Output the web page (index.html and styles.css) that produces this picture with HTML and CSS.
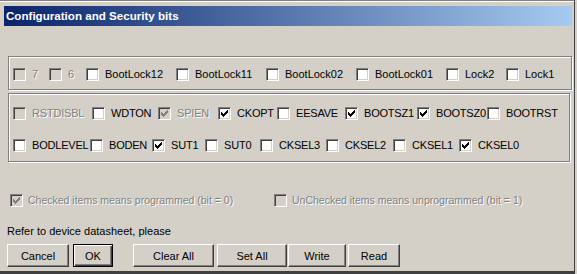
FILE: index.html
```html
<!DOCTYPE html>
<html lang="en">
<head>
    <meta charset="UTF-8">
    <meta name="viewport" content="width=device-width, initial-scale=1.0">
    <title>Configuration and Security bits</title>
    <link rel="stylesheet" href="styles.css">
</head>
<body>
    <div class="window">
        <div class="titlebar">Configuration and Security bits</div>

        <div class="content">
            <!-- Lock bits -->
            <div class="group group-lock">
                <div class="row row-lock">
                    <div class="item off"><span class="cb"></span><span class="lbl">7</span></div>
                    <div class="item off"><span class="cb"></span><span class="lbl">6</span></div>
                    <div class="item"><span class="cb"></span><span class="lbl">BootLock12</span></div>
                    <div class="item"><span class="cb"></span><span class="lbl">BootLock11</span></div>
                    <div class="item"><span class="cb"></span><span class="lbl">BootLock02</span></div>
                    <div class="item"><span class="cb"></span><span class="lbl">BootLock01</span></div>
                    <div class="item"><span class="cb"></span><span class="lbl">Lock2</span></div>
                    <div class="item"><span class="cb"></span><span class="lbl">Lock1</span></div>
                </div>
            </div>

            <!-- Fuse bits -->
            <div class="group group-fuse">
                <div class="row row-high">
                    <div class="item off"><span class="cb"></span><span class="lbl">RSTDISBL</span></div>
                    <div class="item"><span class="cb"></span><span class="lbl">WDTON</span></div>
                    <div class="item off"><span class="cb"><svg width="7" height="7" viewBox="0 0 7 7"><path d="M0 2h1v3h-1zM1 3h1v3h-1zM2 4h1v3h-1zM3 3h1v3h-1zM4 2h1v3h-1zM5 1h1v3h-1zM6 0h1v3h-1z"/></svg></span><span class="lbl">SPIEN</span></div>
                    <div class="item"><span class="cb"><svg width="7" height="7" viewBox="0 0 7 7"><path d="M0 2h1v3h-1zM1 3h1v3h-1zM2 4h1v3h-1zM3 3h1v3h-1zM4 2h1v3h-1zM5 1h1v3h-1zM6 0h1v3h-1z"/></svg></span><span class="lbl">CKOPT</span></div>
                    <div class="item"><span class="cb"></span><span class="lbl">EESAVE</span></div>
                    <div class="item"><span class="cb"><svg width="7" height="7" viewBox="0 0 7 7"><path d="M0 2h1v3h-1zM1 3h1v3h-1zM2 4h1v3h-1zM3 3h1v3h-1zM4 2h1v3h-1zM5 1h1v3h-1zM6 0h1v3h-1z"/></svg></span><span class="lbl">BOOTSZ1</span></div>
                    <div class="item"><span class="cb"><svg width="7" height="7" viewBox="0 0 7 7"><path d="M0 2h1v3h-1zM1 3h1v3h-1zM2 4h1v3h-1zM3 3h1v3h-1zM4 2h1v3h-1zM5 1h1v3h-1zM6 0h1v3h-1z"/></svg></span><span class="lbl">BOOTSZ0</span></div>
                    <div class="item"><span class="cb"></span><span class="lbl">BOOTRST</span></div>
                </div>
                <div class="row row-low">
                    <div class="item"><span class="cb"></span><span class="lbl">BODLEVEL</span></div>
                    <div class="item"><span class="cb"></span><span class="lbl">BODEN</span></div>
                    <div class="item"><span class="cb"><svg width="7" height="7" viewBox="0 0 7 7"><path d="M0 2h1v3h-1zM1 3h1v3h-1zM2 4h1v3h-1zM3 3h1v3h-1zM4 2h1v3h-1zM5 1h1v3h-1zM6 0h1v3h-1z"/></svg></span><span class="lbl">SUT1</span></div>
                    <div class="item"><span class="cb"></span><span class="lbl">SUT0</span></div>
                    <div class="item"><span class="cb"></span><span class="lbl">CKSEL3</span></div>
                    <div class="item"><span class="cb"></span><span class="lbl">CKSEL2</span></div>
                    <div class="item"><span class="cb"></span><span class="lbl">CKSEL1</span></div>
                    <div class="item"><span class="cb"><svg width="7" height="7" viewBox="0 0 7 7"><path d="M0 2h1v3h-1zM1 3h1v3h-1zM2 4h1v3h-1zM3 3h1v3h-1zM4 2h1v3h-1zM5 1h1v3h-1zM6 0h1v3h-1z"/></svg></span><span class="lbl">CKSEL0</span></div>
                </div>
            </div>

            <!-- Legend -->
            <div class="row row-legend">
                <div class="item off"><span class="cb"><svg width="7" height="7" viewBox="0 0 7 7"><path d="M0 2h1v3h-1zM1 3h1v3h-1zM2 4h1v3h-1zM3 3h1v3h-1zM4 2h1v3h-1zM5 1h1v3h-1zM6 0h1v3h-1z"/></svg></span><span class="lbl">Checked items means programmed (bit = 0)</span></div>
                <div class="item off"><span class="cb"></span><span class="lbl">UnChecked items means unprogrammed (bit = 1)</span></div>
            </div>

            <p class="note">Refer to device datasheet, please</p>

            <div class="buttons">
                <button class="btn btn-cancel">Cancel</button>
                <button class="btn btn-ok default">OK</button>
                <button class="btn btn-clear">Clear All</button>
                <button class="btn btn-set">Set All</button>
                <button class="btn btn-write">Write</button>
                <button class="btn btn-read">Read</button>
            </div>
        </div>
    </div>
</body>
</html>
```

FILE: styles.css
```css
html, body {
    margin: 0;
    padding: 0;
}
body {
    width: 577px;
    height: 274px;
    overflow: hidden;
    background-color: #d4d0c8;
    font-family: "Liberation Sans", Arial, sans-serif;
    font-size: 11px;
    color: #000;
}
.window {
    box-sizing: border-box;
    width: 575px;
    height: 274px;
    padding: 6px 0 0 0;
    border-top: 1px solid #808080;
    border-right: 1px solid #404040;
    border-bottom: 3px solid #404040;
    box-shadow: inset 0 1px #fff;
}
.titlebar {
    height: 20px;
    margin: -1px 2px 0 4px;
    padding-left: 2px;
    background: linear-gradient(to right, #0a246a, #a6caf0);
    color: #fff;
    font-weight: bold;
    font-size: 11.6px;
    line-height: 20px;
    white-space: nowrap;
}
.content {
    padding: 30px 0 0 7px;
}

/* group boxes (etched) */
.group {
    width: 558px;
    margin-left: 1px;
    border: 1px solid #808080;
    box-shadow: inset 1px 1px #fff, 1px 1px #fff;
}
.group-lock {
    padding: 11px 0 8px 4px;
}
.group-fuse {
    width: 556px;
    margin-top: 3px;
    padding: 13px 0 9px 4px;
}
.group-fuse .row + .row {
    margin-top: 19px;
}

.row {
    display: grid;
    align-items: center;
}
.row-lock {
    grid-template-columns: 36px 37px 90px 90px 90px 90px 60px auto;
}
.row-high {
    grid-template-columns: 79px 66px 60px 59px 68px 72px 70px auto;
}
.row-low {
    grid-template-columns: 77px 62px 53px 55px 66px 67px 66px auto;
}
.row-high .lbl,
.row-low .lbl {
    letter-spacing: -0.2px;
}
.row-legend {
    grid-template-columns: 264px auto;
    margin: 32px 0 0 3px;
}
.row-legend .item {
    gap: 5px;
}
.row-legend .lbl {
    font-size: 10.5px;
}

.item {
    display: flex;
    align-items: center;
    gap: 6px;
    height: 13px;
    white-space: nowrap;
}
.lbl {
    line-height: 13px;
}

/* classic sunken check box */
.cb {
    box-sizing: border-box;
    flex: none;
    width: 13px;
    height: 13px;
    background: #fff;
    border-top: 1px solid #808080;
    border-left: 1px solid #808080;
    border-bottom: 1px solid #fff;
    border-right: 1px solid #fff;
    box-shadow: inset 1px 1px #404040, inset -1px -1px #d4d0c8;
}
.cb svg {
    display: block;
    margin: 2px 0 0 2px;
    shape-rendering: crispEdges;
    fill: #000;
}
.off .cb {
    background: #d4d0c8;
}
.off .cb svg {
    fill: #808080;
}
.off .lbl {
    color: #808080;
    text-shadow: 1px 1px #fff;
}

.note {
    margin: 18px 0 0 0;
    line-height: 13px;
}

/* push buttons */
.buttons {
    display: flex;
    margin-top: 6px;
}
.btn {
    box-sizing: border-box;
    height: 23px;
    padding: 0;
    background: #d4d0c8;
    font-family: "Liberation Sans", Arial, sans-serif;
    font-size: 11px;
    color: #000;
    border: 1px solid;
    border-color: #fff #404040 #404040 #fff;
    box-shadow: inset -1px -1px #808080, inset 1px 1px #d4d0c8;
    border-radius: 0;
}
.btn.default {
    border: 1px solid #000;
    box-shadow: inset 1px 1px #fff, inset -1px -1px #404040, inset -2px -2px #808080;
}
.btn-cancel { width: 62px; }
.btn-ok { width: 40px; margin-left: 4px; }
.btn-clear { width: 81px; margin-left: 20px; }
.btn-set { width: 70px; margin-left: 3px; }
.btn-write { width: 58px; margin-left: 1px; }
.btn-read { width: 52px; margin-left: 2px; }
```
